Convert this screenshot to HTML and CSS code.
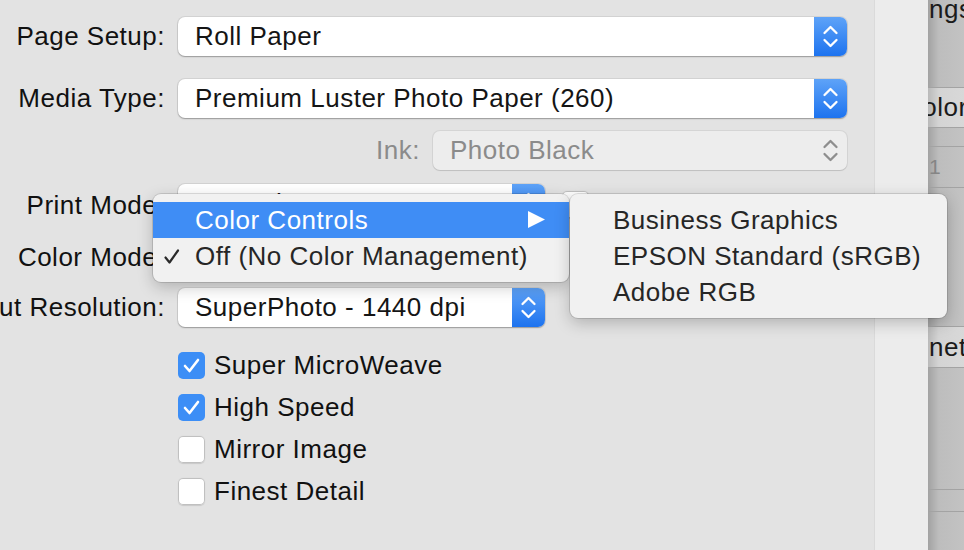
FILE: index.html
```html
<!DOCTYPE html>
<html>
<head>
<meta charset="utf-8">
<link rel="stylesheet" href="styles.css">
</head>
<body>
<div class="screen">
  <div class="panel">
    <div class="row first">
      <div class="label">Page Setup:</div>
      <div class="popup full"><span class="value">Roll Paper</span><span class="stepper"><svg width="33" height="39" viewBox="0 0 33 39"><polyline points="10.5,16 16.5,10 22.5,16"/><polyline points="10.5,23 16.5,29 22.5,23"/></svg></span></div>
    </div>
    <div class="row second">
      <div class="label">Media Type:</div>
      <div class="popup full"><span class="value">Premium Luster Photo Paper (260)</span><span class="stepper"><svg width="33" height="39" viewBox="0 0 33 39"><polyline points="10.5,16 16.5,10 22.5,16"/><polyline points="10.5,23 16.5,29 22.5,23"/></svg></span></div>
    </div>
    <div class="row ink-row">
      <div class="label dim">Ink:</div>
      <div class="popup ink disabled"><span class="value">Photo Black</span><span class="stepper"><svg width="33" height="39" viewBox="0 0 33 39"><polyline points="10.5,16 16.5,10 22.5,16"/><polyline points="10.5,23 16.5,29 22.5,23"/></svg></span></div>
    </div>
    <div class="row mode-row">
      <div class="label">Print Mode:</div>
      <div class="popup half"><span class="value">Auto Photo HDR</span><span class="stepper"><svg width="33" height="39" viewBox="0 0 33 39"><polyline points="10.5,16 16.5,10 22.5,16"/><polyline points="10.5,23 16.5,29 22.5,23"/></svg></span></div>
      <div class="inline-check"><span class="box"></span><span>16 Bit Output</span></div>
    </div>
    <div class="row mode-row">
      <div class="label">Color Mode:</div>
      <div class="popup half"><span class="value">Off (No Color Management)</span><span class="stepper"><svg width="33" height="39" viewBox="0 0 33 39"><polyline points="10.5,16 16.5,10 22.5,16"/><polyline points="10.5,23 16.5,29 22.5,23"/></svg></span></div>
    </div>
    <div class="row">
      <div class="label">Output Resolution:</div>
      <div class="popup half"><span class="value">SuperPhoto - 1440 dpi</span><span class="stepper"><svg width="33" height="39" viewBox="0 0 33 39"><polyline points="10.5,16 16.5,10 22.5,16"/><polyline points="10.5,23 16.5,29 22.5,23"/></svg></span></div>
    </div>
    <div class="checks">
      <div class="check"><span class="box on"><svg width="27" height="27" viewBox="0 0 27 27"><polyline points="7,14 11.5,19 20,8"/></svg></span><span>Super MicroWeave</span></div>
      <div class="check"><span class="box on"><svg width="27" height="27" viewBox="0 0 27 27"><polyline points="7,14 11.5,19 20,8"/></svg></span><span>High Speed</span></div>
      <div class="check"><span class="box"></span><span>Mirror Image</span></div>
      <div class="check"><span class="box"></span><span>Finest Detail</span></div>
    </div>
  </div>
  <div class="strip"></div>
  <div class="side">
    <div class="band b1"><span class="side-text top">ngs</span></div>
    <div class="band b2"><span class="side-text cut">Color</span></div>
    <div class="band b3"></div>
    <div class="band b4"><span class="side-num">1</span></div>
    <div class="band b5"></div>
    <div class="band b6"><span class="side-text">netr</span></div>
    <div class="band b7"></div>
    <div class="band b8"></div>
    <div class="band b9"></div>
  </div>

  <div class="menu main-menu">
    <div class="item active"><span>Color Controls</span><svg class="arrow" width="17" height="17" viewBox="0 0 17 17"><polygon points="0,0 17,8.5 0,17"/></svg></div>
    <div class="item"><svg class="tick" width="16" height="16" viewBox="0 0 16 16"><polyline points="1.5,8.5 5.5,13.5 14,1.5"/></svg><span>Off (No Color Management)</span></div>
  </div>
  <div class="menu sub-menu">
    <div class="item">Business Graphics</div>
    <div class="item">EPSON Standard (sRGB)</div>
    <div class="item">Adobe RGB</div>
  </div>
</div>
</body>
</html>
```
FILE: styles.css
```css
* { box-sizing: border-box; }
html, body { margin: 0; padding: 0; }
body { background: #e3e3e3; }

.screen {
  position: relative;
  display: flex;
  width: 964px;
  height: 550px;
  overflow: hidden;
  font-family: "Liberation Sans", Arial, sans-serif;
  font-size: 26px;
  letter-spacing: 0.5px;
  color: #111;
}

.panel {
  width: 874px;
  flex: none;
  height: 550px;
  background: #e3e3e3;
  padding-top: 17px;
  display: flex;
  flex-direction: column;
}

.row {
  display: flex;
  align-items: center;
  height: 39px;
  margin-bottom: 13px;
}
.row.first { margin-bottom: 23px; }
.row.ink-row { margin-bottom: 14px; }
.row.mode-row .label { padding-top: 4px; }

.label {
  width: 165px;
  flex: none;
  margin-right: 13px;
  display: flex;
  justify-content: flex-end;
  white-space: nowrap;
}
.label.dim { color: #8b8b8b; width: auto; margin-left: auto; }
.ink-row { padding-right: 27px; }

.popup {
  position: relative;
  height: 39px;
  display: flex;
  align-items: center;
  background: #fff;
  border-radius: 7px;
  box-shadow: 0 0 0 1px rgba(0,0,0,0.07), 0 1px 1.5px rgba(0,0,0,0.28);
  flex: none;
}
.popup.full { width: 669px; }
.popup.half { width: 367px; }
.popup.ink { width: 414px; }
.popup .value {
  flex: 1;
  padding-left: 17px;
  white-space: nowrap;
  color: #151515;
}
.stepper {
  width: 33px;
  height: 39px;
  flex: none;
  border-radius: 0 7px 7px 0;
  background: linear-gradient(#5ea3f8, #1d73ef);
}
.stepper svg { display: block; }
.stepper polyline {
  fill: none;
  stroke: #fff;
  stroke-width: 2.3;
  stroke-linecap: round;
  stroke-linejoin: round;
}
.popup.disabled {
  background: #ededed;
  box-shadow: 0 0 0 1px rgba(0,0,0,0.06), 0 1px 1px rgba(0,0,0,0.1);
}
.popup.disabled .value { color: #8b8b8b; }
.popup.disabled .stepper { background: none; }
.popup.disabled .stepper polyline { stroke: #8e8e8e; }

.inline-check {
  display: flex;
  align-items: center;
  margin-left: 17px;
  gap: 13px;
  align-self: flex-start;
  margin-top: 5px;
  white-space: nowrap;
}

.checks {
  margin-top: 4px;
  padding-left: 178px;
  display: flex;
  flex-direction: column;
}
.check {
  height: 42px;
  display: flex;
  align-items: center;
  gap: 9px;
  white-space: nowrap;
}
.box {
  width: 27px;
  height: 27px;
  flex: none;
  border-radius: 5px;
  background: #fff;
  box-shadow: inset 0 0 0 1px #c0c0c0, 0 0.5px 1px rgba(0,0,0,0.12);
}
.box.on {
  background: #3c8ef6;
  box-shadow: none;
}
.box svg { display: block; }
.box polyline {
  fill: none;
  stroke: #fff;
  stroke-width: 2.6;
  stroke-linecap: round;
  stroke-linejoin: round;
}

.strip {
  width: 54px;
  flex: none;
  background: #ececec;
  border-left: 1px solid #dadada;
}

.side {
  width: 36px;
  flex: none;
  display: flex;
  flex-direction: column;
  overflow: hidden;
  background: linear-gradient(to right, #a2a2a2, #bdbdbd 30%, #c3c3c3);
}
.band {
  flex: none;
  overflow: hidden;
  white-space: nowrap;
  border-bottom: 1px solid #a3a3a3;
  display: flex;
  align-items: center;
}
.b1 { height: 88px; align-items: flex-start; }
.b2 { height: 40px; background: linear-gradient(to right, #b9b9b9, #d4d4d4 30%, #d8d8d8); }
.b3 { height: 19px; }
.b4 { height: 41px; }
.b5 { height: 139px; }
.b6 { height: 41px; background: linear-gradient(to right, #b9b9b9, #d4d4d4 30%, #d8d8d8); }
.b7 { height: 122px; }
.b8 { height: 22px; }
.b9 { flex: 1; border-bottom: none; }

.side-text { color: #1b1b1b; padding-left: 1px; }
.side-text.top { margin-top: -6px; }
.side-text.cut { margin-left: -26px; }
.side-num { color: #858585; font-size: 21px; padding-left: 1px; }

.menu {
  position: absolute;
  top: 194px;
  background: #f1f1f1;
  border-radius: 8px;
  padding: 8px 0;
  box-shadow: 0 0 0 1px rgba(0,0,0,0.12), 0 5px 16px rgba(0,0,0,0.22);
  color: #262626;
}
.main-menu { left: 153px; width: 416px; }
.sub-menu { left: 570px; width: 377px; }
.item {
  position: relative;
  height: 36px;
  display: flex;
  align-items: center;
  white-space: nowrap;
}
.main-menu .item { padding-left: 42px; }
.sub-menu .item { padding-left: 43px; }
.item.active { background: #3f8df5; color: #fff; }
.arrow { position: absolute; left: 375px; top: 9px; }
.arrow polygon { fill: #fff; }
.tick { position: absolute; left: 11px; top: 11px; }
.tick polyline {
  fill: none;
  stroke: #2a2a2a;
  stroke-width: 2.2;
  stroke-linecap: round;
  stroke-linejoin: round;
}
```
